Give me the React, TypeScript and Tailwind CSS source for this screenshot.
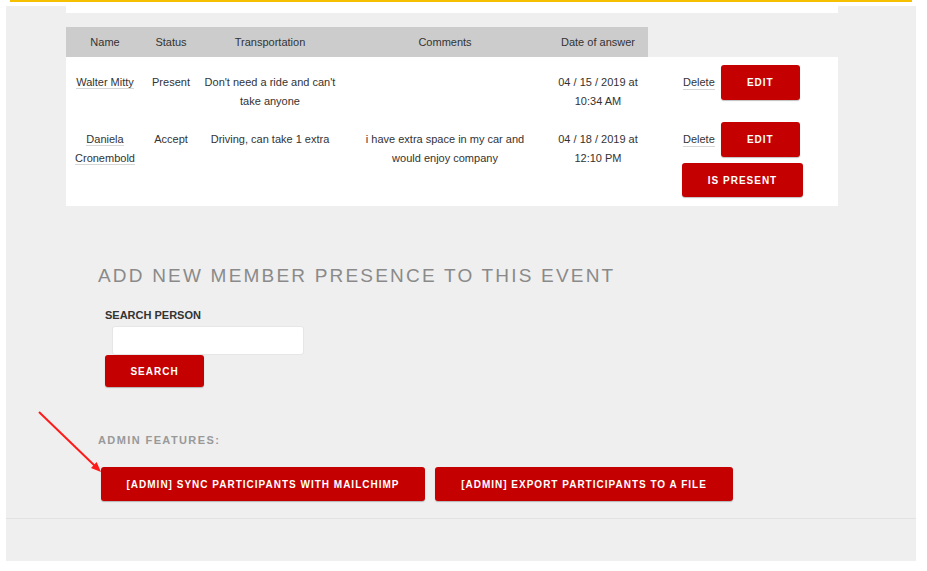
import React from 'react';

const cols = 'grid grid-cols-[78px_54px_144px_206px_100px_190px]';

const RedButton = ({ label, className = '' }: { label: string; className?: string }) => (
  <button
    className={`bg-[#c40000] text-white font-bold text-[10px] tracking-[1px] uppercase rounded-[3px] shadow-[0_1px_1px_rgba(0,0,0,0.25)] flex items-center justify-center ${className}`}
  >
    {label}
  </button>
);

const Delete = () => (
  <span className="text-[11px] text-[#333] leading-[14px] border-b border-[#d6d6d6]">Delete</span>
);

const cell = 'pt-[16px] px-[4px] text-center text-[11px] leading-[19px] text-[#333]';

const App: React.FC = () => {
  return (
    <div className="relative w-[927px] h-[571px] bg-white font-['Liberation_Sans',Arial,sans-serif] overflow-hidden">
      <div className="ml-[10px] w-[902px] h-[2px] bg-[#f5c000]" />
      <div className="mt-[4px] ml-[6px] w-[910px] h-[555px] bg-[#efefef] flex flex-col">
        <div className="pl-[60px] pr-[78px]">
          <div className="h-[7px] bg-white" />

          {/* table header */}
          <div className={`${cols} mt-[14px] h-[30px] text-[11px] text-[#333]`}>
            {['Name', 'Status', 'Transportation', 'Comments', 'Date of answer'].map((h) => (
              <div key={h} className="bg-[#cccccc] flex items-center justify-center">
                {h}
              </div>
            ))}
            <div />
          </div>

          {/* table body */}
          <div className="bg-white">
            <div className={`${cols} h-[57px]`}>
              <div className={cell}>
                <span className="border-b border-[#d6d6d6]">Walter Mitty</span>
              </div>
              <div className={cell}>Present</div>
              <div className={cell}>Don't need a ride and can't take anyone</div>
              <div className={cell} />
              <div className={cell}>
                04 / 15 / 2019 at
                <br />
                10:34 AM
              </div>
              <div className="pt-[8px] pl-[35px] flex items-start">
                <div className="flex items-center gap-[6px]">
                  <Delete />
                  <RedButton label="Edit" className="w-[79px] h-[35px]" />
                </div>
              </div>
            </div>

            <div className={`${cols} h-[92px]`}>
              <div className={cell}>
                <span className="border-b border-[#d6d6d6]">Daniela</span>
                <br />
                <span className="border-b border-[#d6d6d6]">Cronembold</span>
              </div>
              <div className={cell}>Accept</div>
              <div className={cell}>Driving, can take 1 extra</div>
              <div className={`${cell} px-[14px]`}>i have extra space in my car and would enjoy company</div>
              <div className={cell}>
                04 / 18 / 2019 at
                <br />
                12:10 PM
              </div>
              <div className="pt-[8px] pl-[35px] flex flex-col items-start">
                <div className="flex items-center gap-[6px]">
                  <Delete />
                  <RedButton label="Edit" className="w-[79px] h-[35px]" />
                </div>
                <RedButton label="Is present" className="mt-[6px] -ml-[1px] w-[121px] h-[34px]" />
              </div>
            </div>
          </div>

          {/* add member */}
          <h2 className="mt-[58px] pl-[32px] text-[19px] leading-[24px] tracking-[2.2px] text-[#8a8a8a] uppercase">
            Add new member presence to this event
          </h2>
          <div className="mt-[20px] pl-[39px] text-[11px] leading-[14px] font-bold text-[#333]">SEARCH PERSON</div>
          <input className="block mt-[4px] ml-[46px] w-[192px] h-[29px] bg-white rounded-[3px] border border-[#e6e6e6] outline-none" />
          <RedButton label="Search" className="ml-[39px] w-[99px] h-[32px]" />

          {/* admin */}
          <div className="mt-[46px] pl-[32px] text-[11px] leading-[14px] font-bold tracking-[1.4px] text-[#999]">
            ADMIN FEATURES:
          </div>
          <div className="mt-[20px] ml-[35px] flex gap-[10px]">
            <RedButton label="[Admin] Sync participants with Mailchimp" className="w-[324px] h-[34px]" />
            <RedButton label="[Admin] Export participants to a file" className="w-[298px] h-[34px]" />
          </div>
        </div>
        <div className="mt-[17px] border-t border-[#e2e2e2]" />
      </div>

      {/* annotation arrow */}
      <svg className="absolute left-[30px] top-[405px]" width="80" height="75" viewBox="0 0 80 75">
        <line x1="9" y1="7" x2="65" y2="61" stroke="#ff1a1a" strokeWidth="2" />
        <polygon points="71,67 61,62.9 66.6,57.1" fill="#ff1a1a" />
      </svg>
    </div>
  );
};

export default App;
